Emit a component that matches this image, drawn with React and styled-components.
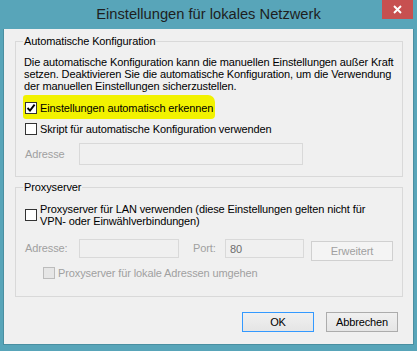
import React from 'react';
import styled, { createGlobalStyle } from 'styled-components';

const GlobalStyle = createGlobalStyle`
  html, body {
    margin: 0;
    padding: 0;
  }
  body {
    background: #58a5b9;
    font-family: "Liberation Sans", Arial, sans-serif;
    font-size: 11px;
    letter-spacing: -0.12px;
  }
`;

const Window = styled.div`
  width: 417px;
  height: 351px;
  background: #58a5b9;
  display: flex;
  flex-direction: column;
`;

const TitleBar = styled.div`
  height: 29px;
  flex: none;
  display: grid;
  grid-template-columns: 1fr auto 1fr;
  padding: 0 4px;
`;

const Title = styled.div`
  grid-column: 2;
  padding-top: 1px;
  font-size: 14.7px;
  line-height: 26px;
  letter-spacing: 0;
  color: #1e1e1e;
  white-space: nowrap;
`;

const CloseButton = styled.div`
  grid-column: 3;
  justify-self: end;
  width: 31px;
  height: 19px;
  background: #c75050;
  display: flex;
  align-items: center;
  justify-content: center;
`;

const Client = styled.div`
  flex: 1;
  margin: 0 3px 6px 3px;
  background: #f0f0f0;
  border: 1px solid #4a8fa1;
  border-top: none;
  display: flex;
  flex-direction: column;
`;

const Group = styled.fieldset`
  margin: ${(p) => p.$top}px 10px 0 11px;
  padding: 0 10px ${(p) => p.$padBottom}px 8px;
  border: 1px solid #d9d9d9;
  min-width: 0;
  display: flex;
  flex-direction: column;
  align-items: flex-start;
`;

const Legend = styled.legend`
  margin-left: -1px;
  padding: 0 1px;
  line-height: 12px;
  color: #000;
`;

const Text = styled.p`
  margin: ${(p) => p.$mt}px 0 0 0;
  line-height: 12px;
  white-space: nowrap;
  color: #000;
`;

const CheckRow = styled.div`
  display: flex;
  align-items: center;
  gap: 3px;
  margin-top: ${(p) => p.$mt || 0}px;
  line-height: ${(p) => (p.$multi ? 12 : 14)}px;
  min-height: 14px;
  padding-left: ${(p) => (p.$indent || 0) + 1}px;
  white-space: nowrap;
  color: ${(p) => (p.$disabled ? '#a0a0a0' : '#000')};
  ${(p) =>
    p.$mark &&
    `
    background: #f2f200;
    margin: ${(p.$mt || 0) - 6}px 0 -4px -1px;
    padding: 6px 2px 4px 2px;
    border-radius: 3px 7px 4px 3px;
  `}
`;

const Box = styled.span`
  width: 12px;
  height: 12px;
  box-sizing: border-box;
  flex: none;
  border: 1px solid ${(p) => (p.$disabled ? '#bcbcbc' : '#333333')};
  background: ${(p) => (p.$disabled ? '#e6e6e6' : '#ffffff')};
  display: flex;
  align-items: center;
  justify-content: center;
`;

const FieldRow = styled.div`
  display: flex;
  align-items: flex-start;
  margin-top: ${(p) => p.$mt}px;
`;

const FieldLabel = styled.span`
  width: ${(p) => p.$w}px;
  margin-left: ${(p) => p.$gap || 0}px;
  padding-left: 1px;
  box-sizing: border-box;
  flex: none;
  line-height: ${(p) => p.$h}px;
  color: #a0a0a0;
`;

const Field = styled.input`
  box-sizing: border-box;
  width: ${(p) => p.$w}px;
  height: ${(p) => p.$h}px;
  margin: 0;
  padding: 0 4px;
  border: 1px solid #d9d9d9;
  background: #f0f0f0;
  font-family: inherit;
  font-size: 11px;
  color: #6d6d6d;
  -webkit-text-fill-color: #6d6d6d;
  opacity: 1;
  outline: none;
`;

const Button = styled.button`
  box-sizing: border-box;
  width: ${(p) => p.$w}px;
  height: 20px;
  margin: ${(p) => p.$top || 0}px 0 0 ${(p) => p.$left || 0}px;
  padding: 0;
  border: 1px solid ${(p) => (p.$primary ? '#3399ff' : '#acacac')};
  background: linear-gradient(#f0f0f0, #e5e5e5);
  font-family: inherit;
  font-size: 11px;
  letter-spacing: -0.12px;
  color: #000;

  &:disabled {
    border-color: #d0d0d0;
    background: #f4f4f4;
    color: #a0a0a0;
  }
`;

const ButtonRow = styled.div`
  display: flex;
  justify-content: flex-end;
  gap: 12px;
  margin-top: 15px;
  padding-right: 15px;
`;

const CheckMark = () => (
  <svg width="10" height="10" viewBox="0 0 10 10">
    <polyline points="1.5,5 4,7.6 8.6,1.6" fill="none" stroke="#000" strokeWidth="1.9" />
  </svg>
);

const CloseIcon = () => (
  <svg width="9" height="9" viewBox="0 0 9 9">
    <path d="M1 1 L8 8 M8 1 L1 8" stroke="#fff" strokeWidth="1.9" />
  </svg>
);

const Check = ({ checked, disabled, indent, mark, multi, mt, children }) => (
  <CheckRow $disabled={disabled} $indent={indent} $mark={mark} $multi={multi} $mt={mt}>
    <Box $disabled={disabled}>{checked && <CheckMark />}</Box>
    <span>{children}</span>
  </CheckRow>
);

export default function App() {
  return (
    <>
      <GlobalStyle />
      <Window>
        <TitleBar>
          <Title>Einstellungen für lokales Netzwerk</Title>
          <CloseButton>
            <CloseIcon />
          </CloseButton>
        </TitleBar>
        <Client>
          <Group $top={6} $padBottom={11}>
            <Legend>Automatische Konfiguration</Legend>
            <Text $mt={9}>
              Die automatische Konfiguration kann die manuellen Einstellungen außer Kraft
              <br />
              setzen. Deaktivieren Sie die automatische Konfiguration, um die Verwendung
              <br />
              der manuellen Einstellungen sicherzustellen.
            </Text>
            <Check checked mark mt={9}>
              Einstellungen automatisch erkennen
            </Check>
            <Check mt={7}>Skript für automatische Konfiguration verwenden</Check>
            <FieldRow $mt={7}>
              <FieldLabel $w={55} $h={22}>
                Adresse
              </FieldLabel>
              <Field $w={224} $h={22} disabled defaultValue="" />
            </FieldRow>
          </Group>

          <Group $top={4} $padBottom={16}>
            <Legend>Proxyserver</Legend>
            <Check multi mt={10}>
              Proxyserver für LAN verwenden (diese Einstellungen gelten nicht für
              <br />
              VPN- oder Einwählverbindungen)
            </Check>
            <FieldRow $mt={12}>
              <FieldLabel $w={55} $h={19}>
                Adresse:
              </FieldLabel>
              <Field $w={100} $h={19} disabled defaultValue="" />
              <FieldLabel $w={33} $h={19} $gap={13}>
                Port:
              </FieldLabel>
              <Field $w={79} $h={19} disabled defaultValue="80" />
              <Button $w={82} $top={2} $left={7} disabled>
                Erweitert
              </Button>
            </FieldRow>
            <Check disabled indent={18} mt={5}>
              Proxyserver für lokale Adressen umgehen
            </Check>
          </Group>

          <ButtonRow>
            <Button $w={72} $primary>
              OK
            </Button>
            <Button $w={72}>Abbrechen</Button>
          </ButtonRow>
        </Client>
      </Window>
    </>
  );
}
